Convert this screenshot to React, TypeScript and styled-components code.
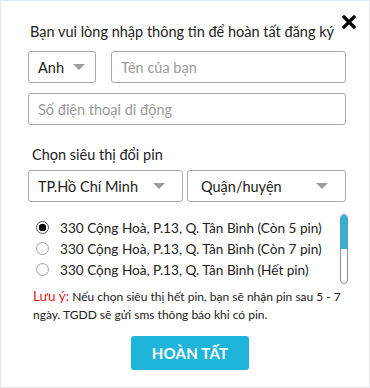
import React from "react";
import styled, { createGlobalStyle } from "styled-components";

const Global = createGlobalStyle`
  html, body { margin: 0; padding: 0; background: #fff; }
  * { box-sizing: border-box; }
  body { font-family: "Lato", "Open Sans", "Liberation Sans", sans-serif; color: #333; }
`;

const Modal = styled.div`
  position: relative;
  width: 370px;
  height: 388px;
  border: 1px solid #e3e8ec;
  border-top-color: #dde8ef;
  background: #fff;
  padding: 20px 23px 0 27px;
  display: flex;
  flex-direction: column;
`;

const Close = styled.button`
  position: absolute;
  top: 12px;
  right: 12px;
  width: 17px;
  height: 17px;
  padding: 0;
  border: none;
  background: transparent;
  display: flex;
  align-items: center;
  justify-content: center;
  cursor: pointer;
`;

const Title = styled.div`
  font-size: 14.5px;
  line-height: 22px;
  color: #222;
  padding-left: 2px;
`;

const Row = styled.div<{ $mt: number; $gap?: number }>`
  display: flex;
  gap: ${(p) => p.$gap ?? 0}px;
  margin-top: ${(p) => p.$mt}px;
`;

const Field = styled.div<{ $w?: number }>`
  height: 32px;
  border: 1px solid #a9a9a9;
  border-radius: 3px;
  background: #fff;
  display: flex;
  align-items: center;
  ${(p) => (p.$w ? `width: ${p.$w}px; flex: none;` : "flex: 1;")}
`;

const Input = styled.input`
  border: none;
  outline: none;
  background: transparent;
  width: 100%;
  height: 100%;
  padding: 0 9px;
  font-family: inherit;
  font-size: 14.5px;
  color: #333;
  &::placeholder { color: #9a9a9a; }
`;

const SelectBox = styled.div<{ $w?: number; $pl: number; $pr: number }>`
  height: 32px;
  border: 1px solid #a9a9a9;
  border-radius: 3px;
  display: flex;
  align-items: center;
  justify-content: space-between;
  padding: 0 ${(p) => p.$pr}px 0 ${(p) => p.$pl}px;
  font-size: 14.5px;
  color: #222;
  ${(p) => (p.$w ? `width: ${p.$w}px; flex: none;` : "flex: 1;")}
`;

const Caret = styled.span`
  width: 0;
  height: 0;
  border-left: 6px solid transparent;
  border-right: 6px solid transparent;
  border-top: 6px solid #9d9d9d;
`;

const Label = styled.div`
  margin-top: 20px;
  font-size: 14.5px;
  line-height: 20px;
  color: #222;
  padding-left: 4px;
`;

const ListWrap = styled.div`
  margin-top: 12px;
  display: flex;
  justify-content: space-between;
  height: 71px;
`;

const Items = styled.div`
  display: flex;
  flex-direction: column;
  padding-top: 3px;
  padding-left: 8px;
`;

const Item = styled.label`
  display: flex;
  align-items: center;
  height: 21px;
  font-size: 13.6px;
  color: #222;
  gap: 11px;
  cursor: pointer;
`;

const Radio = styled.input`
  appearance: none;
  margin: 0;
  width: 13px;
  height: 13px;
  border-radius: 50%;
  border: 1px solid #a6a6a6;
  background: radial-gradient(circle, #fff 0%, #f3f3f3 100%);
  display: inline-block;
  &:checked {
    border-color: #555;
    background: radial-gradient(circle, #000 0 3.5px, #fff 4px);
  }
`;

const Track = styled.div`
  width: 8px;
  height: 70px;
  margin-right: -2px;
  border: 1px solid #8c8c8c;
  border-radius: 4px;
  overflow: hidden;
  display: flex;
  flex-direction: column;
`;

const Thumb = styled.div`
  height: 35px;
  background: #27b5dd;
  margin: -1px;
  border-radius: 4px 4px 0 0;
`;

const Note = styled.p`
  margin: 2px 0 0 5px;
  font-size: 12px;
  line-height: 18px;
  color: #222;
  padding-right: 0;
`;

const Red = styled.span`
  color: #e8151b;
  font-size: 13.5px;
  line-height: 18px;
`;

const Submit = styled.button`
  align-self: center;
  margin: 12px 0 0 6px;
  width: 118px;
  height: 34px;
  border: none;
  border-radius: 3px;
  background: #1fb4d9;
  color: #fff;
  font-family: inherit;
  font-weight: 700;
  font-size: 15px;
  letter-spacing: 0.2px;
  cursor: pointer;
`;

const stores = [
  "330 Cộng Hoà, P.13, Q. Tân Bình (Còn 5 pin)",
  "330 Cộng Hoà, P.13, Q. Tân Bình (Còn 7 pin)",
  "330 Cộng Hoà, P.13, Q. Tân Bình (Hết pin)",
];

export default function App() {
  return (
    <>
      <Global />
      <Modal>
        <Close aria-label="Đóng">
          <svg width="14" height="14" viewBox="0 0 14 14">
            <path d="M2 2L12 12M12 2L2 12" stroke="#000" strokeWidth="3.2" strokeLinecap="square" />
          </svg>
        </Close>
        <Title>Bạn vui lòng nhập thông tin để hoàn tất đăng ký</Title>
        <Row $mt={8} $gap={15}>
          <SelectBox $w={68} $pl={9} $pr={10}>
            Anh <Caret />
          </SelectBox>
          <Field>
            <Input placeholder="Tên của bạn" />
          </Field>
        </Row>
        <Row $mt={10}>
          <Field>
            <Input placeholder="Số điện thoại di động" />
          </Field>
        </Row>
        <Label>Chọn siêu thị đổi pin</Label>
        <Row $mt={5} $gap={4}>
          <SelectBox $pl={9} $pr={17}>
            TP.Hồ Chí Minh <Caret />
          </SelectBox>
          <SelectBox $pl={13} $pr={17}>
            Quận/huyện <Caret />
          </SelectBox>
        </Row>
        <ListWrap>
          <Items>
            {stores.map((s, i) => (
              <Item key={i}>
                <Radio type="radio" name="store" defaultChecked={i === 0} />
                {s}
              </Item>
            ))}
          </Items>
          <Track>
            <Thumb />
          </Track>
        </ListWrap>
        <Note>
          <Red>Lưu ý:</Red> Nếu chọn siêu thị hết pin, bạn sẽ nhận pin sau 5 - 7 ngày. TGDD sẽ gửi sms thông báo khi có pin.
        </Note>
        <Submit>HOÀN TẤT</Submit>
      </Modal>
    </>
  );
}
